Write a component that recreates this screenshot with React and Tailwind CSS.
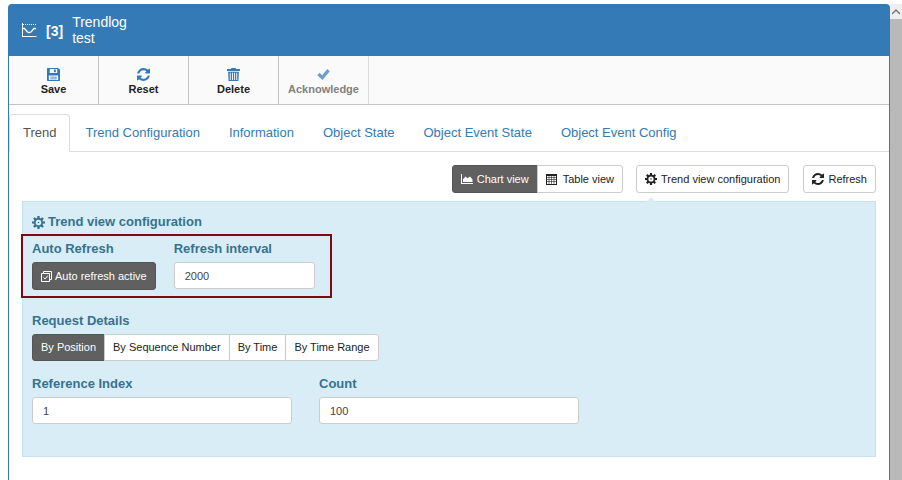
import { useState } from "react";

const TABS = [
  "Trend",
  "Trend Configuration",
  "Information",
  "Object State",
  "Object Event State",
  "Object Event Config",
];

const REQUEST_MODES = ["By Position", "By Sequence Number", "By Time", "By Time Range"];

function RefreshIcon({ className }) {
  return (
    <svg className={className} viewBox="0 0 1536 1536" fill="currentColor" aria-hidden="true">
      <path d="M1511 928q0 5-1 7-64 268-268 434.5t-478 166.5q-146 0-282.5-55t-243.5-157l-129 129q-19 19-45 19t-45-19-19-45v-448q0-26 19-45t45-19h448q26 0 45 19t19 45-19 45l-137 137q71 66 161 102t187 36q134 0 250-65t186-179q11-17 53-117 8-23 30-23h192q13 0 22.5 9.5t9.5 22.5zm25-800v448q0 26-19 45t-45 19h-448q-26 0-45-19t-19-45 19-45l138-138q-148-137-349-137-134 0-250 65t-186 179q-11 17-53 117-8 23-30 23h-199q-13 0-22.5-9.5t-9.5-22.5v-7q65-268 270-434.5t480-166.5q146 0 284 55.5t245 156.5l130-129q19-19 45-19t45 19 19 45z" />
    </svg>
  );
}

function CogIcon({ className }) {
  return (
    <svg className={className} viewBox="-12 -12 24 24" fill="currentColor" aria-hidden="true">
      {[0, 45, 90, 135, 180, 225, 270, 315].map((deg) => (
        <path key={deg} d="M-2.500 -7L-2 -12H2L2.500 -7z" transform={`rotate(${deg})`} />
      ))}
      <circle r="6.8" fill="none" stroke="currentColor" strokeWidth="3.200" />
      <circle r="1.5" />
    </svg>
  );
}

function SaveIcon({ className }) {
  return (
    <svg className={className} viewBox="0 0 14 14" fill="currentColor" aria-hidden="true">
      <path
        fillRule="evenodd"
        d="M.8 0H12l2 2v11.200a.8.8 0 0 1-.8.8H.8a.8.8 0 0 1-.8-.8V.8A.8.8 0 0 1 .8 0zM3 1v4.500h8V1zM2 8v5h10V8z"
      />
      <path d="M7.500 1.500h2v3h-2zM3.500 9.500h7v.8h-7zM3.500 11.400h7v.8h-7z" />
    </svg>
  );
}

function TrashIcon({ className }) {
  return (
    <svg className={className} viewBox="0 0 14 14" fill="currentColor" aria-hidden="true">
      <path
        fillRule="evenodd"
        d="M4.500 0h5v1.200H14v2H0v-2h4.500zM1.200 4h11.600l-.5 10H1.700zM3 5.200v7.600h1V5.200zM5.400 5.200v7.600h1V5.200zM7.700 5.200v7.600h1V5.200zM10 5.200v7.600h1V5.200z"
      />
    </svg>
  );
}

function CheckIcon({ className }) {
  return (
    <svg className={className} viewBox="0 0 14 14" fill="currentColor" aria-hidden="true">
      <path d="M.3 7.800L2.800 5.200l2.700 2.600L11.200 1.200 13.800 3.600 5.900 12.800z" />
    </svg>
  );
}

function AreaChartIcon({ className }) {
  return (
    <svg className={className} viewBox="0 0 12 12" fill="currentColor" aria-hidden="true">
      <path d="M0 1h1v9h11v1H0zM2 9V6.300L4.500 3.500l2 1.700L9 3.500 11.500 6.500V9z" />
    </svg>
  );
}

function TableIcon({ className }) {
  return (
    <svg className={className} viewBox="0 0 11 11" fill="none" stroke="currentColor" aria-hidden="true">
      <path d="M0 1h11" strokeWidth="2" />
      <path d="M.5 0v11M10.500 0v11M0 10.500h11" />
      <path d="M0 3.500h11M0 5.500h11M0 7.500h11M3 2v9M5.500 2v9M8 2v9" strokeWidth=".6" />
    </svg>
  );
}

function TrendIcon({ className }) {
  return (
    <svg className={className} viewBox="0 0 15 15" fill="none" stroke="currentColor" aria-hidden="true">
      <path d="M.5 0v14M0 13.500h14.500" />
      <path d="M1 1.500h13" strokeDasharray="1 1" />
      <path d="M1 5.500h1.500l3 3.500q1.500 1 3.500 0l3-3.500H14" strokeWidth="1.300" />
    </svg>
  );
}

function CheckboxesIcon({ className }) {
  return (
    <svg className={className} viewBox="0 0 11 12" fill="none" stroke="currentColor" aria-hidden="true">
      <path d="M.5 3.500h8v8h-8zM2.500 3V1.500h8v8H9" />
      <path d="M2.500 7.500l1.500 1.500 3-3.500" />
    </svg>
  );
}

function ToolbarButton({ icon, label, disabled }) {
  return (
    <button
      type="button"
      disabled={disabled}
      className="flex w-[90px] flex-col items-center border-r border-[#c4c4c4] pt-3 text-[11px] leading-4 font-bold text-[#222] disabled:border-[#ddd] disabled:text-[#808080]"
    >
      <span className={disabled ? "text-[#6c9fcb]" : "text-[#337ab7]"}>{icon}</span>
      {label}
    </button>
  );
}

function SegmentButton({ active, onClick, children, className }) {
  return (
    <button
      type="button"
      aria-pressed={active}
      onClick={onClick}
      className={`-ml-px flex items-center border px-2 text-[11px] first:ml-0 first:rounded-l-[3px] last:rounded-r-[3px] ${className} ${
        active ? "border-[#555] bg-[#606060] text-white" : "border-[#ccc] bg-white text-[#222]"
      }`}
    >
      {children}
    </button>
  );
}

function Field({ id, label, value, onChange, className }) {
  return (
    <div className={className}>
      <label htmlFor={id} className="block h-[21px] text-[13px] leading-4 font-bold text-[#36728f]">
        {label}
      </label>
      <input
        id={id}
        type="text"
        value={value}
        onChange={(e) => onChange(e.target.value)}
        className="block h-[27px] w-full rounded-[3px] border border-[#ccc] bg-white px-[10px] text-[11px] text-[#444]"
      />
    </div>
  );
}

export default function App() {
  const [tab, setTab] = useState("Trend");
  const [view, setView] = useState("chart");
  const [showConfig, setShowConfig] = useState(true);
  const [autoRefresh, setAutoRefresh] = useState(true);
  const [interval, setRefreshInterval] = useState("2000");
  const [mode, setMode] = useState("By Position");
  const [index, setIndex] = useState("1");
  const [count, setCount] = useState("100");

  return (
    <div className="flex h-screen overflow-hidden bg-white font-['Liberation_Sans',Arial,sans-serif]">
      <main className="mt-1 ml-2 min-w-0 flex-1 rounded-t-[4px] border border-b-0 border-[#337ab7]">
        {/* Header */}
        <header className="flex h-[51px] items-center gap-[9px] bg-[#337ab7] pl-[13px] text-white">
          <TrendIcon className="size-[15px]" />
          <span className="text-sm font-bold">[3]</span>
          <h1 className="pb-px text-sm leading-4">
            Trendlog
            <br />
            test
          </h1>
        </header>

        {/* Toolbar */}
        <div className="flex h-[49px] border-b border-[#c4c4c4] bg-[#fafafa]">
          <ToolbarButton icon={<SaveIcon className="size-[13px]" />} label="Save" />
          <ToolbarButton icon={<RefreshIcon className="size-[13px]" />} label="Reset" />
          <ToolbarButton icon={<TrashIcon className="size-[13px]" />} label="Delete" />
          <ToolbarButton icon={<CheckIcon className="size-[13px]" />} label="Acknowledge" disabled />
        </div>

        {/* Tabs */}
        <nav className="mt-[9px] flex gap-px border-b border-[#ddd]">
          {TABS.map((name) => (
            <button
              key={name}
              type="button"
              onClick={() => setTab(name)}
              className={`-mb-px h-[38px] rounded-t-[4px] border px-[13px] text-[13px] ${
                tab === name
                  ? "border-[#ddd] border-b-white bg-white text-[#555]"
                  : "border-transparent text-[#337ab7]"
              }`}
            >
              {name}
            </button>
          ))}
        </nav>

        <div className="px-[13px] pt-[13px]">
          {/* View switch */}
          <div className="flex justify-end">
            <div className="flex">
              <SegmentButton
                className="h-7 gap-1"
                active={view === "chart"}
                onClick={() => setView("chart")}
              >
                <AreaChartIcon className="size-3" />
                Chart view
              </SegmentButton>
              <SegmentButton
                className="h-7 gap-[6px]"
                active={view === "table"}
                onClick={() => setView("table")}
              >
                <TableIcon className="size-[11px]" />
                Table view
              </SegmentButton>
            </div>
            <button
              type="button"
              aria-expanded={showConfig}
              onClick={() => setShowConfig(!showConfig)}
              className="relative ml-[13px] flex h-7 items-center gap-1 rounded-[3px] border border-[#ccc] bg-white px-2 text-[11px] text-[#222]"
            >
              <CogIcon className="size-3" />
              Trend view configuration
              {showConfig && (
                <span className="absolute top-[31px] left-2 border-x-[6px] border-b-[6px] border-x-transparent border-b-[#d9edf7]" />
              )}
            </button>
            <button
              type="button"
              className="ml-[14px] flex h-7 items-center gap-1 rounded-[3px] border border-[#ccc] bg-white px-2 text-[11px] text-[#222]"
            >
              <RefreshIcon className="size-3" />
              Refresh
            </button>
          </div>

          {/* Trend view configuration */}
          {showConfig && (
            <section className="mt-2 h-64 border border-[#c3e3ec] bg-[#d9edf7] px-[9px] pt-3">
              <h2 className="flex items-center gap-[3px] text-[13px] leading-4 font-bold text-[#36728f]">
                <CogIcon className="size-[13px]" />
                Trend view configuration
              </h2>

              <div className="mt-1 -ml-[11px] flex h-16 w-[311px] gap-[18px] border-2 border-[#7b0a14] px-[9px] pt-[5px]">
                <div>
                  <div className="h-[21px] text-[13px] leading-4 font-bold text-[#36728f]">
                    Auto Refresh
                  </div>
                  <button
                    type="button"
                    aria-pressed={autoRefresh}
                    onClick={() => setAutoRefresh(!autoRefresh)}
                    className="flex h-7 items-center gap-[3px] rounded-[3px] border border-[#555] bg-[#606060] px-2 text-[11px] text-white"
                  >
                    <CheckboxesIcon className="h-3 w-[11px]" />
                    {autoRefresh ? "Auto refresh active" : "Auto refresh inactive"}
                  </button>
                </div>
                <Field
                  id="refresh-interval"
                  label="Refresh interval"
                  value={interval}
                  onChange={setRefreshInterval}
                  className="w-[141px]"
                />
              </div>

              <h3 className="mt-[15px] text-[13px] leading-4 font-bold text-[#36728f]">
                Request Details
              </h3>
              <div className="mt-[5px] flex">
                {REQUEST_MODES.map((name) => (
                  <SegmentButton
                    key={name}
                    className="h-[27px]"
                    active={mode === name}
                    onClick={() => setMode(name)}
                  >
                    {name}
                  </SegmentButton>
                ))}
              </div>

              <div className="mt-[15px] flex gap-[27px]">
                <Field
                  id="reference-index"
                  label="Reference Index"
                  value={index}
                  onChange={setIndex}
                  className="w-[260px]"
                />
                <Field
                  id="count"
                  label="Count"
                  value={count}
                  onChange={setCount}
                  className="w-[260px]"
                />
              </div>
            </section>
          )}
        </div>
      </main>

      {/* Scroll track */}
      <div className="mt-1 w-3 bg-[#b9b9b9]">
        <div className="flex h-[15px] items-center justify-center bg-[#eee]">
          <svg className="h-2 w-2" viewBox="0 0 8 8" fill="none" stroke="#777" strokeWidth="1.500" aria-hidden="true">
            <path d="M0 6l4-4 4 4" />
          </svg>
        </div>
      </div>
    </div>
  );
}
